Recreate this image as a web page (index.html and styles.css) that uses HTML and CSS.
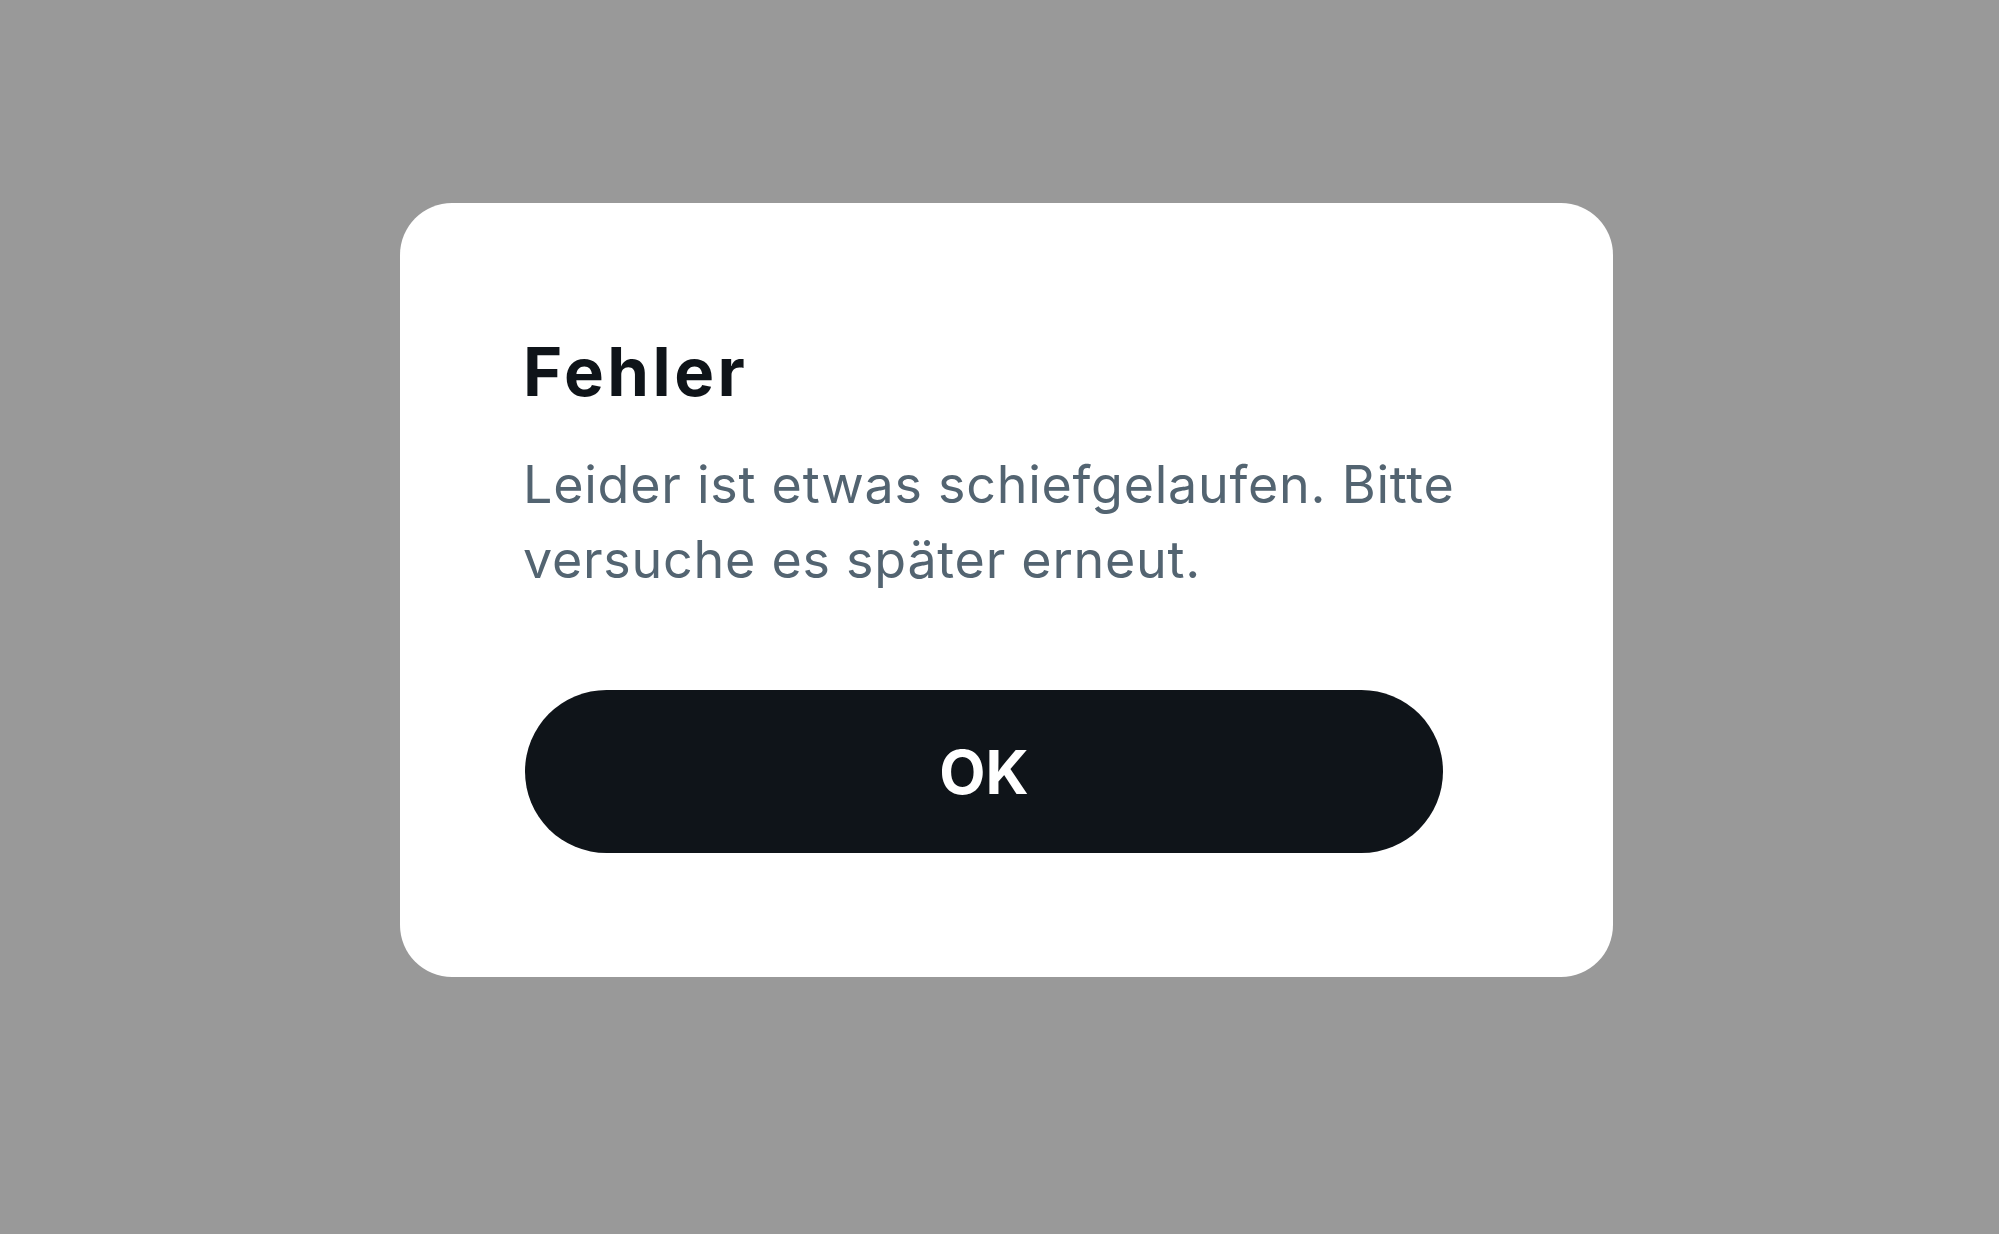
FILE: index.html
```html
<!DOCTYPE html>
<html lang="de">

<head>
    <meta charset="UTF-8">
    <title>Fehler</title>
    <link rel="stylesheet" href="styles.css">
</head>

<body>
    <div class="dialog">
        <h2 class="dialog-title">Fehler</h2>
        <p class="dialog-text">Leider ist etwas schiefgelaufen. Bitte versuche es später erneut.</p>
        <button type="button" class="ok-btn">OK</button>
    </div>
</body>

</html>
```

FILE: styles.css
```css
body {
    margin: 0;
    padding: 203px 0 0 400px;
    background: #999999;
    font-family: Inter, "Noto Sans", sans-serif;
    min-height: 100vh;
    box-sizing: border-box;
}

.dialog {
    background: white;
    width: 1213px;
    height: 774px;
    box-sizing: border-box;
    border-radius: 52px;
    padding: 129px 80px 0 123px;
}

.dialog-title {
    margin: 0;
    font-size: 67px;
    line-height: 80px;
    font-weight: 700;
    letter-spacing: 3.5px;
    color: #0f1419;
}

.dialog-text {
    margin: 35px 0 0;
    font-size: 52px;
    line-height: 75px;
    letter-spacing: 0.75px;
    color: #536471;
}

.ok-btn {
    display: block;
    margin: 93px 0 0 2px;
    width: 918px;
    height: 163px;
    border: none;
    border-radius: 999px;
    background: #0f1419;
    color: white;
    font-family: inherit;
    font-size: 60px;
    font-weight: 700;
}
```
